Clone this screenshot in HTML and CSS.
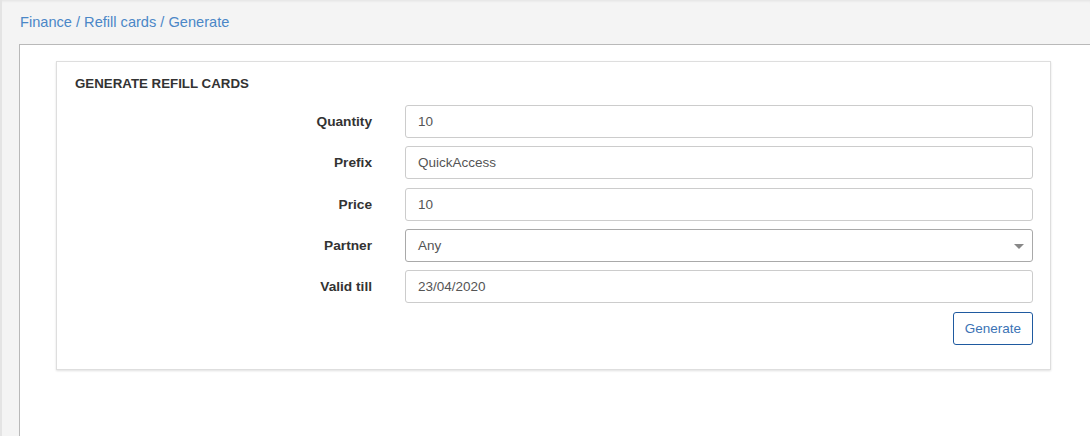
FILE: index.html
```html
<!DOCTYPE html>
<html>
<head>
<meta charset="utf-8">
<link rel="stylesheet" href="styles.css">
</head>
<body>
<div class="app">
  <div class="rail"></div>
  <div class="main">
    <div class="topbar">
      <nav class="crumbs"><a>Finance</a> / <a>Refill cards</a> / <a>Generate</a></nav>
    </div>
    <div class="content">
      <div class="card">
        <h3 class="card-title">GENERATE REFILL CARDS</h3>
        <form class="form">
          <label class="lbl">Quantity</label>
          <div class="field">10</div>
          <label class="lbl">Prefix</label>
          <div class="field">QuickAccess</div>
          <label class="lbl">Price</label>
          <div class="field">10</div>
          <label class="lbl">Partner</label>
          <div class="field select">Any<span class="caret"></span></div>
          <label class="lbl">Valid till</label>
          <div class="field">23/04/2020</div>
          <div class="actions"><button type="button" class="btn">Generate</button></div>
        </form>
      </div>
    </div>
  </div>
</div>
</body>
</html>
```
FILE: styles.css
```css
html, body { margin: 0; padding: 0; height: 100%; }
body {
  background: #f4f4f4;
  font-family: "Liberation Sans", Arial, sans-serif;
  font-size: 13px;
  color: #333;
}
.app { display: flex; height: 436px; overflow: hidden; }
.rail { width: 2px; background: #e4e4e4; flex: none; }
.main { flex: 1; display: flex; flex-direction: column; }
.topbar {
  height: 44px;
  display: flex;
  align-items: center;
  padding-left: 18px;
  box-shadow: inset 0 3px 3px -2px rgba(0,0,0,0.08);
}
.crumbs { font-size: 14.6px; color: #4b87c7; }
.crumbs a { color: #4b87c7; }
.content {
  flex: 1;
  margin-left: 17px;
  background: #fff;
  border-left: 1px solid #b9b9b9;
  border-top: 1px solid #b9b9b9;
  padding: 16px 39px 0 36px;
}
.card {
  border: 1px solid #dedede;
  box-shadow: 0 1px 2px rgba(0,0,0,0.12);
  padding: 13px 17px 24px 18px;
}
.card-title {
  margin: 0 0 12px;
  font-size: 13.3px;
  font-weight: bold;
  color: #333;
  line-height: 18px;
}
.form {
  display: grid;
  grid-template-columns: 297px 1fr;
  column-gap: 33px;
  row-gap: 8.25px;
  align-items: center;
}
.lbl { text-align: right; font-weight: bold; font-size: 13.7px; color: #333; }
.field {
  position: relative;
  height: 33px;
  box-sizing: border-box;
  border: 1px solid #cccccc;
  border-radius: 3px;
  padding: 0 12px;
  display: flex;
  align-items: center;
  font-size: 13.5px;
  color: #555;
}
.select { border-color: #a9a9a9; }
.caret {
  position: absolute;
  right: 8px;
  top: 14px;
  width: 0; height: 0;
  border-left: 5px solid transparent;
  border-right: 5px solid transparent;
  border-top: 5px solid #888;
}
.actions { grid-column: 2; display: flex; justify-content: flex-end; margin-top: 0.75px; }
.btn {
  font-family: "Liberation Sans", Arial, sans-serif;
  font-size: 13.5px;
  color: #3b73b5;
  background: #fff;
  border: 1px solid #1f5aa0;
  border-radius: 3px;
  height: 33px;
  width: 80px;
  padding: 0;
}
```
